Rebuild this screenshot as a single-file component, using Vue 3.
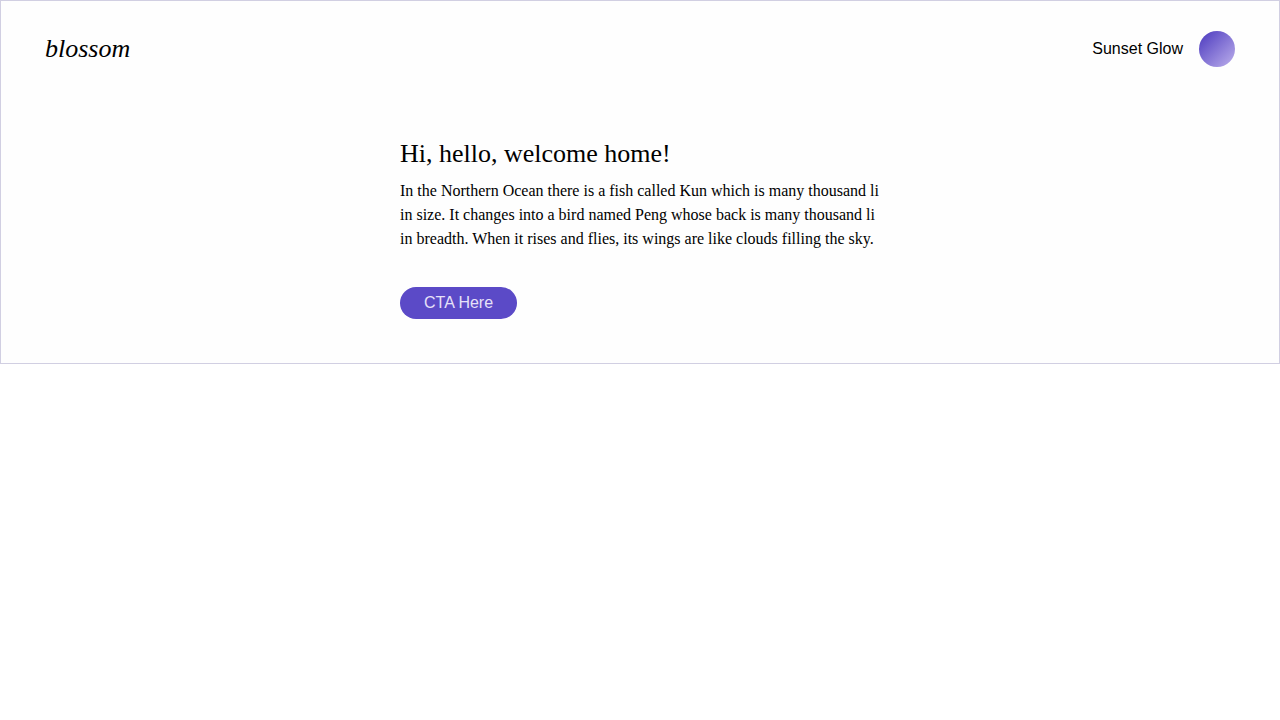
<script setup>
const brand = 'blossom'
const user = 'Sunset Glow'
</script>

<template>
  <div class="page">
    <header class="bar">
      <div class="brand">{{ brand }}</div>
      <div class="user">
        <span>{{ user }}</span>
        <div class="avatar"></div>
      </div>
    </header>
    <main class="content">
      <h1>Hi, hello, welcome home!</h1>
      <p>In the Northern Ocean there is a fish called Kun which is many thousand li in size. It changes into a bird named Peng whose back is many thousand li in breadth. When it rises and flies, its wings are like clouds filling the sky.</p>
      <button class="cta" type="button">CTA Here</button>
    </main>
  </div>
</template>

<style>
body {
  background: #fff;
}
</style>

<style scoped>
.page {
  box-sizing: border-box;
  height: 364px;
  border: 1px solid #d1cfe2;
  background: #fefefe;
  color: #000;
  font: 16px/24px "Liberation Serif", serif;
}
.bar {
  display: flex;
  align-items: center;
  justify-content: space-between;
  height: 96px;
  padding: 0 44px;
}
.brand {
  font-size: 26px;
  font-style: italic;
  line-height: 30px;
}
.user {
  display: flex;
  align-items: center;
  gap: 16px;
  font-family: "Liberation Sans", sans-serif;
}
.avatar {
  width: 36px;
  height: 36px;
  border-radius: 50%;
  background: linear-gradient(135deg, #4a38be, #bdb0ec);
}
.content {
  width: 480px;
  margin: 0 auto;
  padding-top: 42px;
}
h1 {
  margin: 0 0 10px;
  font-size: 26px;
  font-weight: 400;
  line-height: 30px;
}
p {
  margin: 0 0 36px;
}
.cta {
  display: block;
  height: 32px;
  padding: 0 24px;
  border: 0;
  border-radius: 16px;
  background: #5b4ac7;
  color: #e6e1f8;
  font: 16px/32px "Liberation Sans", sans-serif;
}
</style>
